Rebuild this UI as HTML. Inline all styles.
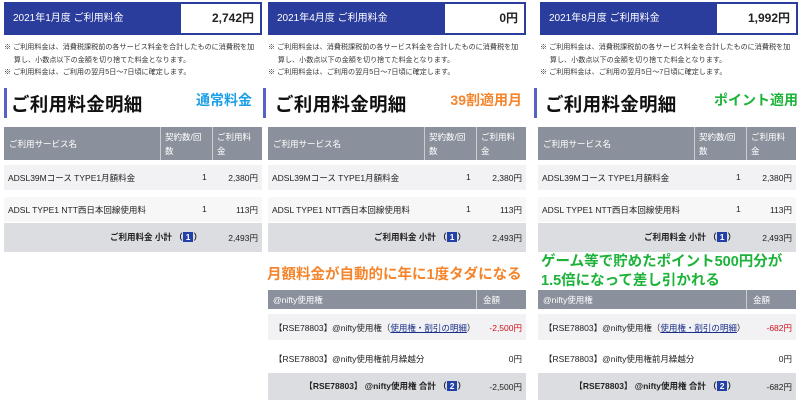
<!DOCTYPE html>
<html><head><meta charset="utf-8"><style>
*{margin:0;padding:0;box-sizing:border-box}
body{width:802px;height:403px;background:#fff;position:relative;overflow:hidden;font-family:"Liberation Sans","Noto Sans CJK JP",sans-serif;color:#222}
.p{position:absolute;top:0;width:266px;height:403px}
.a{position:absolute}
.hdr{left:4px;top:2px;width:258px;height:33px;border:2px solid #2a3d9c;background:#fff}
.hdr .b{position:absolute;left:0;top:0;width:175px;height:100%;background:#2a3d9c;color:#fff;font-size:10px;line-height:29px;padding-left:7px}
.hdr .v{position:absolute;right:6px;top:0;line-height:29px;font-size:12px;font-weight:bold}
.note{left:4px;font-size:7.1px;line-height:13px;color:#333;white-space:nowrap}
.tb{left:4px;top:88px;width:3px;height:30px;background:#5562c4}
.tt{left:11px;top:91px;font-size:18.5px;font-weight:bold;color:#111;letter-spacing:0.3px}
.lab{top:90px;right:14px;font-size:14px;font-weight:bold}
.th{background:#8b919c;color:#fff;font-size:9px}
.r{left:4px;width:258px;font-size:8.5px}
.r span{position:absolute}
.bx{display:inline-block;background:#2340a8;color:#fff;padding:0 3px;font-weight:bold}
</style></head><body>

<div class="p" style="left:0">
 <div class="a hdr"><div class="b">2021年1月度 ご利用料金</div><div class="v">2,742円</div></div>
 <div class="a note" style="top:41px">※ ご利用料金は、消費税課税前の各サービス料金を合計したものに消費税を加<br>&nbsp;&nbsp;&nbsp;&nbsp;&nbsp;算し、小数点以下の金額を切り捨てた料金となります。</div>
 <div class="a note" style="top:66px">※ ご利用料金は、ご利用の翌月5日～7日頃に確定します。</div>
 <div class="a tb"></div><div class="a tt">ご利用料金明細</div>
 <div class="a lab" style="color:#1ea0e6">通常料金</div>
 <div class="a r th" style="top:127px;height:33px"><span style="left:5px;top:11px">ご利用サービス名</span><span style="left:156px;top:0;height:33px;border-left:1px solid #ccc;padding:3px 4px;width:52px;line-height:14px">契約数/回数</span><span style="left:208px;top:0;height:33px;border-left:1px solid #ccc;padding:3px 4px;width:50px;line-height:14px">ご利用料金</span></div>
 <div class="a r" style="top:165px;height:25px;background:#f2f2f4"><span style="left:4px;top:7px">ADSL39Mコース TYPE1月額料金</span><span style="left:198px;top:7px">1</span><span style="right:4px;top:7px">2,380円</span></div>
 <div class="a r" style="top:197px;height:25px;background:#f7f7f8"><span style="left:4px;top:7px">ADSL TYPE1 NTT西日本回線使用料</span><span style="left:198px;top:7px">1</span><span style="right:4px;top:7px">113円</span></div>
 <div class="a r" style="top:223px;height:29px;background:#dcdde1;font-weight:bold"><span style="right:60px;top:8px">ご利用料金 小計 （<b class="bx">1</b>）</span><span style="right:4px;top:9px;font-weight:normal">2,493円</span></div>
</div>

<div class="p" style="left:264px">
 <div class="a hdr"><div class="b">2021年4月度 ご利用料金</div><div class="v">0円</div></div>
 <div class="a note" style="top:41px">※ ご利用料金は、消費税課税前の各サービス料金を合計したものに消費税を加<br>&nbsp;&nbsp;&nbsp;&nbsp;&nbsp;算し、小数点以下の金額を切り捨てた料金となります。</div>
 <div class="a note" style="top:66px">※ ご利用料金は、ご利用の翌月5日～7日頃に確定します。</div>
 <div class="a tb" style="left:-1px"></div><div class="a tt">ご利用料金明細</div>
 <div class="a lab" style="color:#f5842a;right:8px">39割適用月</div>
 <div class="a r th" style="top:127px;height:33px"><span style="left:5px;top:11px">ご利用サービス名</span><span style="left:156px;top:0;height:33px;border-left:1px solid #ccc;padding:3px 4px;width:52px;line-height:14px">契約数/回数</span><span style="left:208px;top:0;height:33px;border-left:1px solid #ccc;padding:3px 4px;width:50px;line-height:14px">ご利用料金</span></div>
 <div class="a r" style="top:165px;height:25px;background:#f2f2f4"><span style="left:4px;top:7px">ADSL39Mコース TYPE1月額料金</span><span style="left:198px;top:7px">1</span><span style="right:4px;top:7px">2,380円</span></div>
 <div class="a r" style="top:197px;height:25px;background:#f7f7f8"><span style="left:4px;top:7px">ADSL TYPE1 NTT西日本回線使用料</span><span style="left:198px;top:7px">1</span><span style="right:4px;top:7px">113円</span></div>
 <div class="a r" style="top:223px;height:29px;background:#dcdde1;font-weight:bold"><span style="right:60px;top:8px">ご利用料金 小計 （<b class="bx">1</b>）</span><span style="right:4px;top:9px;font-weight:normal">2,493円</span></div>
 <div class="a" style="left:3px;top:263px;font-size:14.5px;font-weight:bold;color:#f5842a;white-space:nowrap">月額料金が自動的に年に1度タダになる</div>
 <div class="a r th" style="top:290px;height:19px"><span style="left:5px;top:4px;font-size:8.5px">@nifty使用権</span><span style="left:208px;top:0;height:19px;border-left:1px solid #ccc;padding:4px 6px;width:50px">金額</span></div>
 <div class="a r" style="top:314px;height:26px;background:#f2f2f4"><span style="left:6px;top:8px">【RSE78803】@nifty使用権（<u style="color:#1a2f8a">使用権・割引の明細</u>）</span><span style="right:4px;top:8px;color:#d0101a">-2,500円</span></div>
 <div class="a r" style="top:342px;height:30px"><span style="left:6px;top:11px">【RSE78803】@nifty使用権前月繰越分</span><span style="right:4px;top:11px">0円</span></div>
 <div class="a r" style="top:373px;height:27px;background:#dcdde1;font-weight:bold"><span style="right:60px;top:7px">【RSE78803】 @nifty使用権 合計 （<b class="bx">2</b>）</span><span style="right:4px;top:8px;font-weight:normal">-2,500円</span></div>
</div>

<div class="p" style="left:534px">
 <div class="a hdr" style="left:6px"><div class="b">2021年8月度 ご利用料金</div><div class="v">1,992円</div></div>
 <div class="a note" style="top:41px;left:6px">※ ご利用料金は、消費税課税前の各サービス料金を合計したものに消費税を加<br>&nbsp;&nbsp;&nbsp;&nbsp;&nbsp;算し、小数点以下の金額を切り捨てた料金となります。</div>
 <div class="a note" style="top:66px;left:6px">※ ご利用料金は、ご利用の翌月5日～7日頃に確定します。</div>
 <div class="a tb" style="left:0"></div><div class="a tt">ご利用料金明細</div>
 <div class="a lab" style="color:#1db33a;right:2px">ポイント適用</div>
 <div class="a r th" style="top:127px;height:33px;left:4px"><span style="left:5px;top:11px">ご利用サービス名</span><span style="left:156px;top:0;height:33px;border-left:1px solid #ccc;padding:3px 4px;width:52px;line-height:14px">契約数/回数</span><span style="left:208px;top:0;height:33px;border-left:1px solid #ccc;padding:3px 4px;width:50px;line-height:14px">ご利用料金</span></div>
 <div class="a r" style="top:165px;height:25px;background:#f2f2f4"><span style="left:4px;top:7px">ADSL39Mコース TYPE1月額料金</span><span style="left:198px;top:7px">1</span><span style="right:4px;top:7px">2,380円</span></div>
 <div class="a r" style="top:197px;height:25px;background:#f7f7f8"><span style="left:4px;top:7px">ADSL TYPE1 NTT西日本回線使用料</span><span style="left:198px;top:7px">1</span><span style="right:4px;top:7px">113円</span></div>
 <div class="a r" style="top:223px;height:29px;background:#dcdde1;font-weight:bold"><span style="right:60px;top:8px">ご利用料金 小計 （<b class="bx">1</b>）</span><span style="right:4px;top:9px;font-weight:normal">2,493円</span></div>
 <div class="a" style="left:7px;top:253px;font-size:14.5px;line-height:19px;font-weight:bold;color:#1db33a;white-space:nowrap">ゲーム等で貯めたポイント500円分が<br>1.5倍になって差し引かれる</div>
 <div class="a r th" style="top:290px;height:19px"><span style="left:5px;top:4px;font-size:8.5px">@nifty使用権</span><span style="left:208px;top:0;height:19px;border-left:1px solid #ccc;padding:4px 6px;width:50px">金額</span></div>
 <div class="a r" style="top:314px;height:26px;background:#f2f2f4"><span style="left:6px;top:8px">【RSE78803】@nifty使用権（<u style="color:#1a2f8a">使用権・割引の明細</u>）</span><span style="right:4px;top:8px;color:#d0101a">-682円</span></div>
 <div class="a r" style="top:342px;height:30px"><span style="left:6px;top:11px">【RSE78803】@nifty使用権前月繰越分</span><span style="right:4px;top:11px">0円</span></div>
 <div class="a r" style="top:373px;height:27px;background:#dcdde1;font-weight:bold"><span style="right:60px;top:7px">【RSE78803】 @nifty使用権 合計 （<b class="bx">2</b>）</span><span style="right:4px;top:8px;font-weight:normal">-682円</span></div>
</div>
</body></html>
